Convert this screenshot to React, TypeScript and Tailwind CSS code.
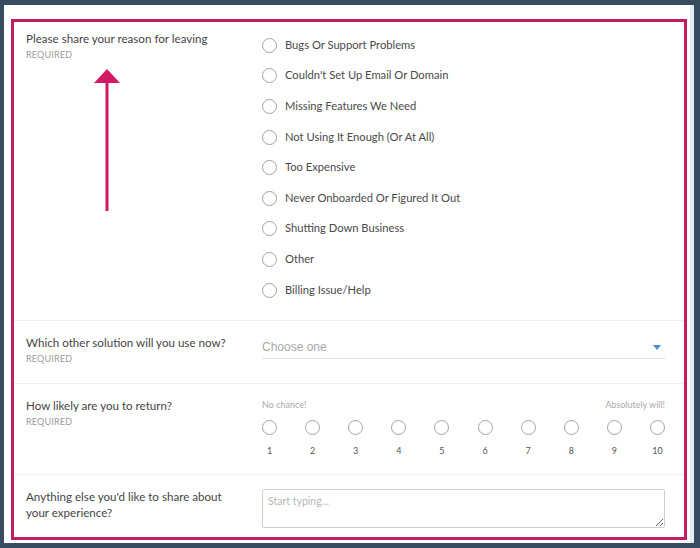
import React from 'react';

const reasons = [
  'Bugs Or Support Problems',
  "Couldn't Set Up Email Or Domain",
  'Missing Features We Need',
  'Not Using It Enough (Or At All)',
  'Too Expensive',
  'Never Onboarded Or Figured It Out',
  'Shutting Down Business',
  'Other',
  'Billing Issue/Help',
];

const scale = [1, 2, 3, 4, 5, 6, 7, 8, 9, 10];

function Radio() {
  return <span className="block w-[15px] h-[15px] rounded-full border-[1.5px] border-[#a3a3a3] bg-white shrink-0" />;
}

function Label({ title, required = true }: { title: React.ReactNode; required?: boolean }) {
  return (
    <div className="w-[236px] shrink-0">
      <div className="text-[11.6px] leading-[16px] text-[#454545]">{title}</div>
      {required && <div className="mt-[2px] text-[9px] leading-[12px] tracking-[0.2px] text-[#9a9a9a]">REQUIRED</div>}
    </div>
  );
}

export default function App() {
  return (
    <div className="w-[700px] h-[548px] bg-[#394c5f] pt-[5px] pl-[4px]" style={{ fontFamily: 'Lato, "Open Sans", sans-serif' }}>
      <div className="w-[690px] h-[538px] bg-white border-r-4 border-[#e3ecf3] pt-[14px] pl-[7px]">
        <div className="relative w-[676px] h-[521px] border-[3px] border-[#c21d5e]">
          {/* Reason for leaving */}
          <div className="relative flex h-[299px] border-b border-[#efefef] pl-3 pt-[9px]">
            <Label title="Please share your reason for leaving" />
            <div className="flex flex-col -mt-px">
              {reasons.map((r) => (
                <div key={r} className="flex items-center h-[30.6px] gap-[8px]">
                  <Radio />
                  <span className="text-[11.2px] text-[#4a4a4a]">{r}</span>
                </div>
              ))}
            </div>
            {/* annotation arrow */}
            <svg className="absolute left-[78px] top-[44px]" width="30" height="146" viewBox="0 0 30 146">
              <polygon points="2,17 28,17 15,3" fill="#d01b63" />
              <rect x="13.5" y="16" width="3" height="129" fill="#d01b63" />
            </svg>
          </div>

          {/* Other solution */}
          <div className="flex h-[63px] border-b border-[#efefef] pl-3 pt-[14px]">
            <Label title="Which other solution will you use now?" />
            <div className="w-[403px]">
              <div className="flex items-center justify-between h-[24px] border-b border-[#e2e2e2] pr-[4px] pt-[1px]">
                <span className="text-[12px] text-[#a8a8a8]" style={{ fontFamily: '"Liberation Sans", Arial, sans-serif' }}>
                  Choose one
                </span>
                <svg width="8" height="5" viewBox="0 0 8 5">
                  <polygon points="0,0 8,0 4,5" fill="#4a8fd6" />
                </svg>
              </div>
            </div>
          </div>

          {/* Likelihood */}
          <div className="flex h-[91px] border-b border-[#efefef] pl-3 pt-[14px]">
            <Label title="How likely are you to return?" />
            <div className="w-[403px]">
              <div className="flex justify-between text-[9px] leading-[14px] text-[#a9a9a9]">
                <span>No chance!</span>
                <span>Absolutely will!</span>
              </div>
              <div className="flex justify-between mt-[8px]">
                {scale.map((n) => (
                  <div key={n} className="flex flex-col items-center w-[15px]">
                    <Radio />
                    <span className="mt-[10px] text-[9px] leading-[12px] text-[#555]">{n}</span>
                  </div>
                ))}
              </div>
            </div>
          </div>

          {/* Anything else */}
          <div className="flex pl-3 pt-[14px]">
            <Label
              title={
                <>
                  Anything else you'd like to share about
                  <br />
                  your experience?
                </>
              }
              required={false}
            />
            <textarea
              placeholder="Start typing..."
              className="w-[403px] h-[39px] border border-[#cfcfcf] rounded-[2px] px-[5px] py-[4px] text-[10.5px] leading-[14px] placeholder:text-[#b8b8b8] outline-none"
            />
          </div>
        </div>
      </div>
    </div>
  );
}
